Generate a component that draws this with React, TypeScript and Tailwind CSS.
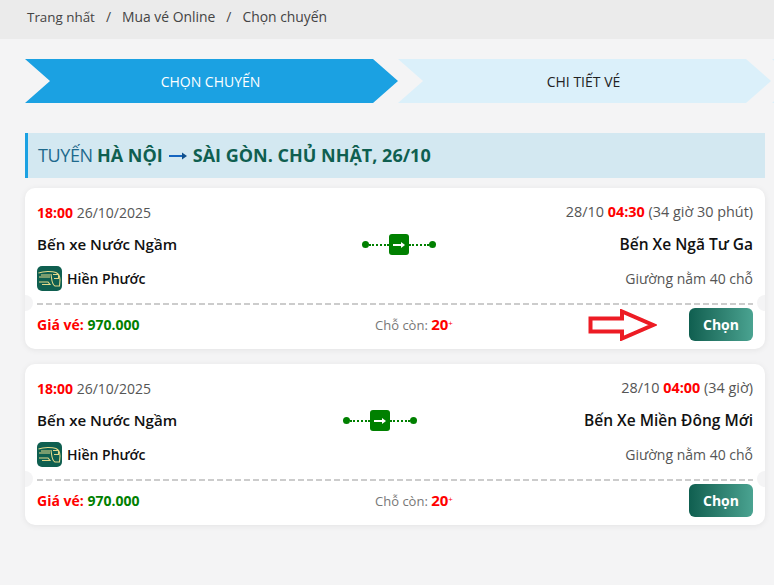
import React from "react";

function Logo() {
  return (
    <div className="w-[25px] h-[25px] rounded-[5px] bg-[#0f5f50] shrink-0 flex items-center justify-center">
      <svg width="25" height="25" viewBox="0 0 25 25" fill="none" stroke="#e3d98a" strokeWidth="1.1">
        <path d="M1.5 7 C7 5 15 5 19 6.5 C22 8 23 10.5 23 14 L22.5 20 H18 C16 19 15 16 14.5 12 L14 8" />
        <path d="M2 11 H13 M4 9 H13" />
        <path d="M2 16 H11 L13 18.5 H5" />
        <path d="M16 8.5 H21.5 V12.5 H17" />
      </svg>
    </div>
  );
}

function Route({ shift }: { shift: string }) {
  return (
    <div className={`flex items-center ${shift}`}>
      <span className="w-[7px] h-[7px] rounded-full bg-[#008000]" />
      <span className="w-[20px] border-t-2 border-dotted border-[#008000]" />
      <span className="w-[20px] h-[21px] rounded-[3px] bg-[#008000] flex items-center justify-center">
        <svg width="12" height="8" viewBox="0 0 12 8">
          <path d="M0 4 H9" stroke="#fff" strokeWidth="1.8" />
          <path d="M8 1 L12 4 L8 7 Z" fill="#fff" />
        </svg>
      </span>
      <span className="w-[20px] border-t-2 border-dotted border-[#008000]" />
      <span className="w-[7px] h-[7px] rounded-full bg-[#008000]" />
    </div>
  );
}

function Card({
  arriveDate,
  arriveTime,
  duration,
  to,
  routeShift,
  arrow,
}: {
  arriveDate: string;
  arriveTime: string;
  duration: string;
  to: string;
  routeShift: string;
  arrow?: boolean;
}) {
  return (
    <div className="relative bg-white rounded-[10px] shadow-[0_1px_6px_rgba(0,0,0,0.07)] h-[161px] overflow-hidden">
      <div className="px-3 h-[115px] flex flex-col">
        <div className="flex justify-between items-center h-[20px] mt-[14px] text-[#555] text-[14px]">
          <div>
            <b className="text-[#ff0000] font-bold">18:00</b> 26/10/2025
          </div>
          <div className="text-[14.4px]">
            {arriveDate} <b className="text-[#ff0000] font-bold">{arriveTime}</b> {duration}
          </div>
        </div>
        <div className="grid grid-cols-3 items-center h-[22px] mt-[11px] text-[15.1px] font-semibold text-[#111]">
          <div>Bến xe Nước Ngầm</div>
          <div className="flex justify-center">
            <Route shift={routeShift} />
          </div>
          <div className="text-right text-[15.5px] whitespace-nowrap">{to}</div>
        </div>
        <div className="flex justify-between items-center h-[25px] mt-[11px]">
          <div className="flex items-center gap-[5px] font-semibold text-[#111]">
            <Logo />
            <span>Hiền Phước</span>
          </div>
          <div className="text-[#555]">Giường nằm 40 chỗ</div>
        </div>
      </div>
      <div className="h-[2px] mx-[12px] bg-[repeating-linear-gradient(90deg,#cccccc_0,#cccccc_6px,transparent_6px,transparent_9px)]" />
      <span className="absolute left-[-8px] top-[107px] w-[16px] h-[16px] rounded-full bg-[#f4f4f5]" />
      <span className="absolute right-[-8px] top-[107px] w-[16px] h-[16px] rounded-full bg-[#f4f4f5]" />
      <div className="grid grid-cols-3 items-center px-3 h-[44px] pb-[6px]">
        <div className="font-bold text-[#ff0000]">
          Giá vé: <span className="text-[#008000]">970.000</span>
        </div>
        <div className="text-center text-[13px] text-[#777] pl-[38px]">
          Chỗ còn: <b className="text-[15px] text-[#ff0000] font-bold">20</b>
          <sup className="text-[#ff0000] text-[8px]">+</sup>
        </div>
        <div className="flex justify-end items-center">
          {arrow && (
            <svg width="70" height="32" viewBox="0 0 70 32" className="mr-[32px] mt-[2px]">
              <path d="M3.5 9.5 H35 V2.5 L66 16 L35 29.5 V22.5 H3.5 Z" fill="#fff" stroke="#ed1c24" strokeWidth="4" />
            </svg>
          )}
          <button className="w-[64px] h-[33px] rounded-[6px] bg-gradient-to-r from-[#0f5f50] to-[#4aa391] text-white font-bold text-[14px]">
            Chọn
          </button>
        </div>
      </div>
    </div>
  );
}

const CHEVRON = "w-[373px] shrink-0 flex items-center justify-center pr-[2px] [clip-path:polygon(0_0,348px_0,100%_50%,348px_100%,0_100%,25px_50%)]";

export default function App() {
  return (
    <div className="min-h-[585px] bg-[#f4f4f5] text-[14px] overflow-hidden font-['Open_Sans','Noto_Sans',sans-serif]">
      <div className="h-[39px] bg-[#ebebeb] flex items-center pl-[27px] text-[#444] text-[13.9px] gap-[11px] pb-[4px]">
        <span className="text-[13.4px]">Trang nhất</span>
        <span>/</span>
        <span>Mua vé Online</span>
        <span>/</span>
        <span>Chọn chuyến</span>
      </div>
      <div className="flex mt-[20px] ml-[25px] w-[749px] h-[44px]">
        <div className={`${CHEVRON} bg-[#1ba1e2] text-white`}>CHỌN CHUYẾN</div>
        <div className={`${CHEVRON} bg-[#dbf0fa] text-[#222]`}>CHI TIẾT VÉ</div>
        <div className={`${CHEVRON} bg-[#dbf0fa] ml-[1px]`} />
      </div>
      <div className="mx-[25px] mt-[30px] w-[740px] h-[45px] bg-[#d3e8f1] border-l-[3px] border-[#1ba1e2] flex items-center pl-[10px] text-[18px] text-[#1e6a8d]">
        <span className="tracking-[-0.4px]">TUYẾN&nbsp;</span>
        <b className="font-bold text-[#0f5f50] flex items-center">
          <span>HÀ NỘI</span>
          <svg width="18" height="8" viewBox="0 0 18 8" className="mx-[6px] mt-[1px]">
            <path d="M0 4 H14" stroke="#1565c0" strokeWidth="2" />
            <path d="M13 0.5 L18 4 L13 7.5 Z" fill="#0f4f8c" />
          </svg>
          <span>SÀI GÒN. CHỦ NHẬT, 26/10</span>
        </b>
      </div>
      <div className="mx-[25px] mt-[10px] w-[740px] flex flex-col gap-[15px]">
        <Card arriveDate="28/10" arriveTime="04:30" duration="(34 giờ 30 phút)" to="Bến Xe Ngã Tư Ga" routeShift="ml-[8px]" arrow />
        <Card arriveDate="28/10" arriveTime="04:00" duration="(34 giờ)" to="Bến Xe Miền Đông Mới" routeShift="ml-[-30px]" />
      </div>
    </div>
  );
}
